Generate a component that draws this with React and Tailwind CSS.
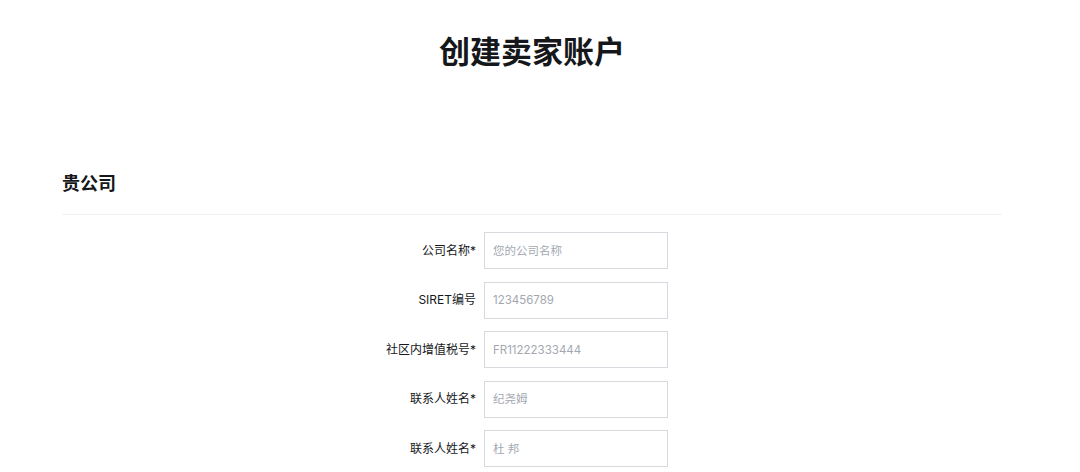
const fields = [
  { label: '公司名称*', placeholder: '您的公司名称' },
  { label: 'SIRET编号', placeholder: '123456789' },
  { label: '社区内增值税号*', placeholder: 'FR11222333444' },
  { label: '联系人姓名*', placeholder: '纪尧姆' },
  { label: '联系人姓名*', placeholder: '杜 邦' },
];

export default function App() {
  return (
    <div
      className="min-h-screen bg-white text-[#1a1a1a]"
      style={{ fontFamily: 'Inter, "Noto Sans CJK SC", sans-serif' }}
    >
      <div className="w-[940px] ml-[62px]">
        <h1 className="pt-[30px] text-center text-[31px] font-bold leading-[43px] text-[#15171a]">
          创建卖家账户
        </h1>

        <h2 className="mt-[97px] text-[18px] font-bold leading-[28px] text-[#15171a]">贵公司</h2>
        <div className="mt-[16px] h-px bg-[#f1f1f1]" />

        <div className="mt-[17px] flex flex-col gap-[12.5px]">
          {fields.map((f, i) => (
            <div key={i} className="flex items-center">
              <label className="w-[422px] pr-[8px] text-right text-[12px] text-[#16181b]">{f.label}</label>
              <input
                className="h-[37px] w-[184px] border border-[#d6d9de] px-2 text-[11.5px] text-[#333] placeholder:text-[#a3a8b0] outline-none"
                placeholder={f.placeholder}
              />
            </div>
          ))}
        </div>
      </div>
    </div>
  );
}
